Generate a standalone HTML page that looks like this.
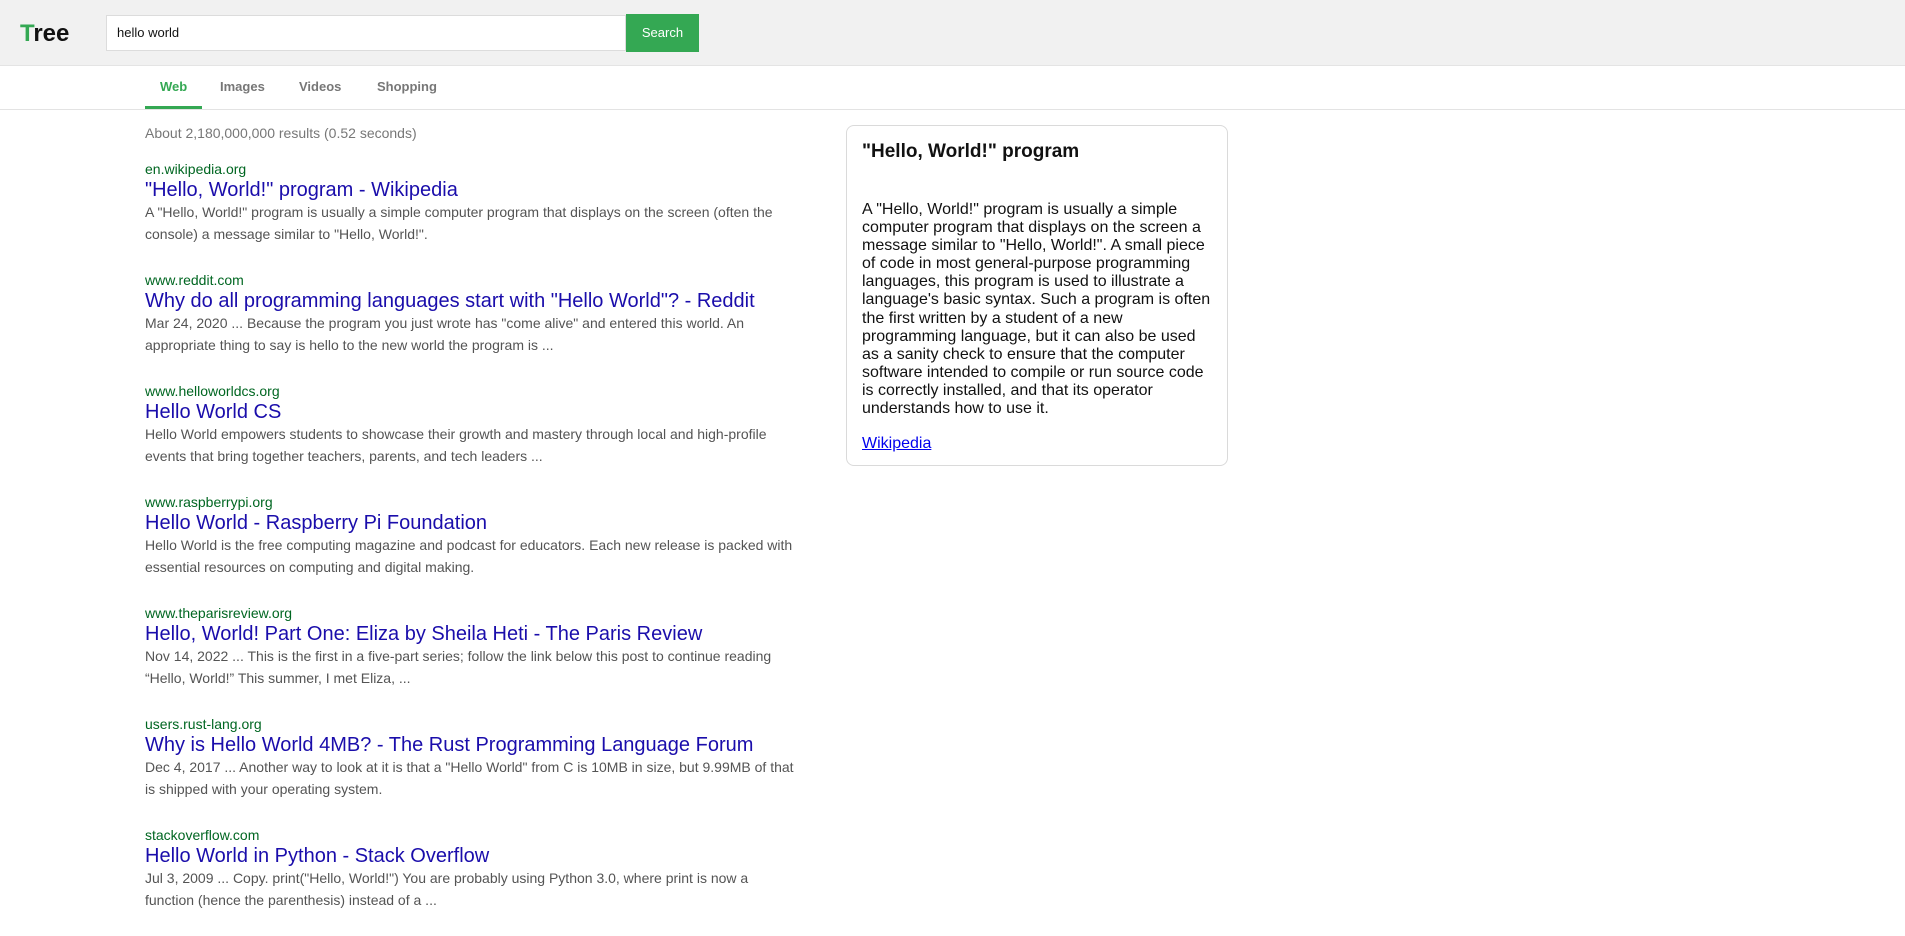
<!DOCTYPE html>
<html><head><meta charset="utf-8"><style>
*{margin:0;padding:0;box-sizing:border-box}
body{width:1905px;height:915px;overflow:hidden;background:#fff;font-family:"Liberation Sans",Arial,sans-serif;position:relative}
.hdr{position:absolute;left:0;top:0;width:1905px;height:66px;background:#f1f1f1;border-bottom:1px solid #e4e4e4}
.logo{position:absolute;left:20px;top:20px;font-size:24px;font-weight:bold;color:#111}
.logo span{color:#34a853}
.inp{position:absolute;left:106px;top:15px;width:520px;height:36px;background:#fff;border:1px solid #dcdcdc;font-size:13px;padding-left:10px;line-height:34px;color:#111}
.btn{position:absolute;left:626px;top:14px;width:73px;height:38px;background:#34a853;color:#fff;font-size:13px;text-align:center;line-height:38px}
.tabs{position:absolute;left:0;top:66px;width:1905px;height:44px;border-bottom:1px solid #e3e3e3}
.tab{position:absolute;top:13px;font-size:13px;font-weight:bold;color:#777;line-height:16px}
.ul{position:absolute;left:145px;top:40px;width:57px;height:3px;background:#34a853}
.count{position:absolute;left:145px;top:123px;font-size:14px;color:#777;line-height:20px}
.res{position:absolute;left:145px;top:159px;width:648px}
.r{height:111px}
.u{font-size:14px;color:#006621;line-height:20px}
.t{font-size:20px;color:#1a0dab;line-height:22px}
.s{font-size:14px;color:#545454;line-height:22px}
.nw{white-space:nowrap}
.kp{position:absolute;left:846px;top:125px;width:382px;height:341px;border:1px solid #dadada;border-radius:8px;padding:14px 15px}
.kp h2{font-size:19px;font-weight:bold;color:#111;line-height:24px}
.kp p{font-size:16px;color:#111;line-height:18.1px;margin-top:37px}
.kp a{display:block;margin-top:16px;font-size:16px;color:#0000ee;text-decoration:underline;line-height:20px}
</style></head><body>
<div class="hdr">
<div class="logo"><span>T</span>ree</div>
<div class="inp">hello world</div>
<div class="btn">Search</div>
</div>
<div class="tabs">
<div class="tab" style="left:160px;color:#34a853">Web</div>
<div class="tab" style="left:220px">Images</div>
<div class="tab" style="left:299px">Videos</div>
<div class="tab" style="left:377px">Shopping</div>
<div class="ul"></div>
</div>
<div class="count">About 2,180,000,000 results (0.52 seconds)</div>
<div class="res">
<div class="r"><div class="u">en.wikipedia.org</div><div class="t">"Hello, World!" program - Wikipedia</div><div class="s">A "Hello, World!" program is usually a simple computer program that displays on the screen (often the console) a message similar to "Hello, World!".</div></div>
<div class="r"><div class="u">www.reddit.com</div><div class="t">Why do all programming languages start with "Hello World"? - Reddit</div><div class="s">Mar 24, 2020 ... Because the program you just wrote has "come alive" and entered this world. An appropriate thing to say is hello to the new world the program is ...</div></div>
<div class="r"><div class="u">www.helloworldcs.org</div><div class="t">Hello World CS</div><div class="s">Hello World empowers students to showcase their growth and mastery through local and high-profile events that bring together teachers, parents, and tech leaders ...</div></div>
<div class="r"><div class="u">www.raspberrypi.org</div><div class="t">Hello World - Raspberry Pi Foundation</div><div class="s">Hello World is the free computing magazine and podcast for educators. Each new release is packed with essential resources on computing and digital making.</div></div>
<div class="r"><div class="u">www.theparisreview.org</div><div class="t">Hello, World! Part One: Eliza by Sheila Heti - The Paris Review</div><div class="s">Nov 14, 2022 ... This is the first in a five-part series; follow the link below this post to continue reading “Hello, World!” This summer, I met Eliza, ...</div></div>
<div class="r"><div class="u">users.rust-lang.org</div><div class="t">Why is Hello World 4MB? - The Rust Programming Language Forum</div><div class="s"><span class="nw">Dec 4, 2017 ... Another way to look at it is that a "Hello World" from C is 10MB in size, but 9.99MB of that</span><br>is shipped with your operating system.</div></div>
<div class="r"><div class="u">stackoverflow.com</div><div class="t">Hello World in Python - Stack Overflow</div><div class="s"><span class="nw">Jul 3, 2009 ... Copy. print("Hello, World!") You are probably using Python 3.0, where print is now a</span><br>function (hence the parenthesis) instead of a ...</div></div>
</div>
<div class="kp">
<h2>"Hello, World!" program</h2>
<p>A "Hello, World!" program is usually a simple computer program that displays on the screen a message similar to "Hello, World!". A small piece of code in most general-purpose programming languages, this program is used to illustrate a language's basic syntax. Such a program is often the first written by a student of a new programming language, but it can also be used as a sanity check to ensure that the computer software intended to compile or run source code is correctly installed, and that its operator understands how to use it.</p>
<a>Wikipedia</a>
</div>
</body></html>
